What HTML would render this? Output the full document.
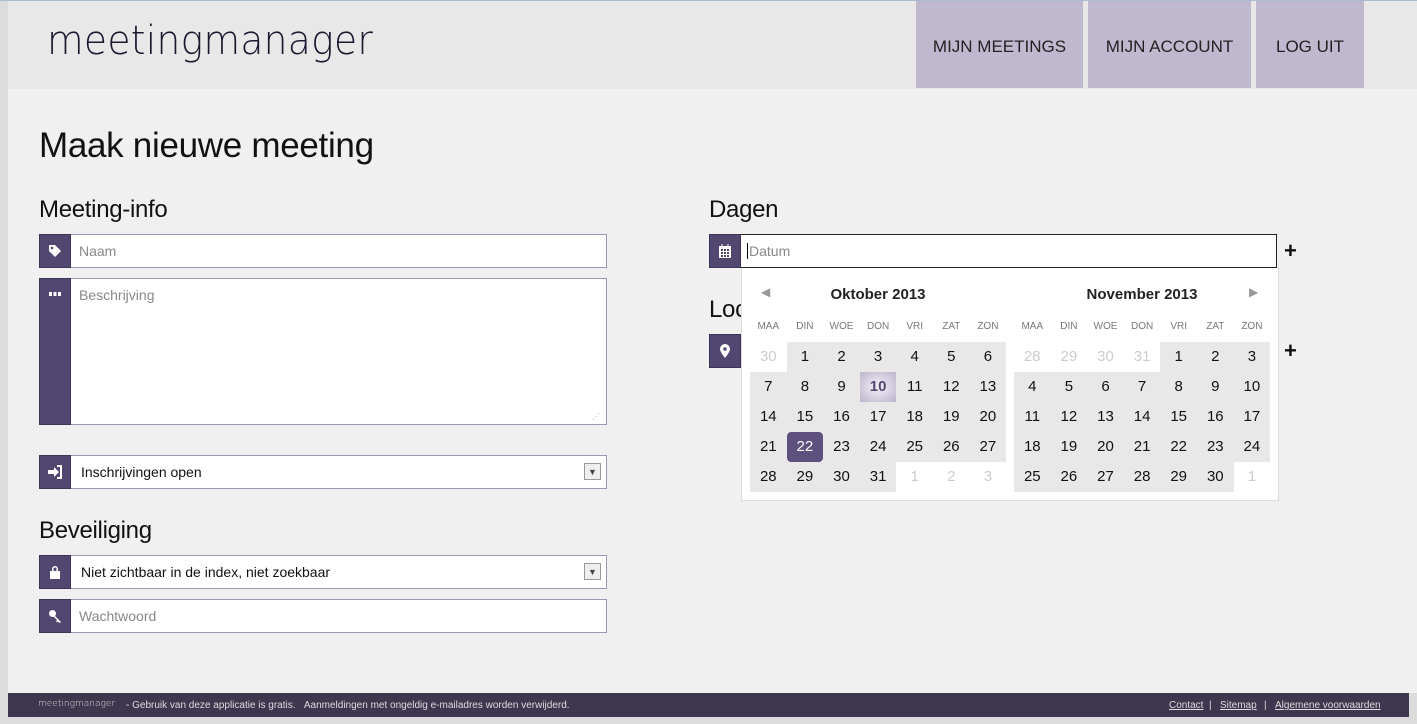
<!DOCTYPE html>
<html><head><meta charset="utf-8"><style>
*{box-sizing:border-box;margin:0;padding:0}
body{width:1417px;height:724px;position:relative;background:#dcdcdc;font-family:"Liberation Sans",sans-serif;overflow:hidden;color:#111}
.a{position:absolute}
#top{left:0;top:0;width:1417px;height:1px;background:#a9bcd0}
#hdr{left:8px;top:1px;width:1409px;height:88px;background:#e8e8e8}
#main{left:8px;top:89px;width:1409px;height:604px;background:#f0f0f0}
.nav{top:1px;height:87px;background:#c0b8cf;color:#222;font-size:17px;display:flex;align-items:center;justify-content:center;padding-top:4px}
h1{position:absolute;left:39px;top:126px;font-weight:normal;font-size:35px;color:#111;letter-spacing:-0.3px}
h2{position:absolute;font-weight:normal;font-size:24px;color:#111;letter-spacing:-0.3px}
.inp{position:absolute;height:34px;background:#fff;border:1px solid #9c95b8;border-left:none}
.ic{position:absolute;width:32px;background:#524770;border:1px solid #3c3355;display:flex;align-items:center;justify-content:center;color:#fff}
.ph{position:absolute;left:8px;top:8px;font-size:14px;color:#888}
.sel{color:#111}
.dd{position:absolute;right:5px;top:7px;width:17px;height:17px;border:1px solid #999;background:#eee;font-size:9px;text-align:center;line-height:16px;color:#444}
.cell{position:absolute;width:36.6px;height:30px;text-align:center;line-height:30px;font-size:15px;color:#111}
.g{background:#e8e8e8}
.o{color:#ccc}
.dh{position:absolute;width:36.6px;text-align:center;font-size:10px;color:#777;top:321px}
#foot{left:8px;top:693px;width:1401px;height:24px;background:#3e374f;color:#ddd;font-size:10px}
</style></head><body>
<div class="a" id="top"></div>
<div class="a" id="hdr"></div>
<div class="a" style="left:47px;top:18px;font-size:40px;color:#1c1830;transform:scaleX(0.94);transform-origin:left;font-family:'DejaVu Sans',sans-serif;font-weight:200;letter-spacing:0.3px">meetingmanager</div>
<div class="a nav" style="left:916px;width:167px">MIJN MEETINGS</div>
<div class="a nav" style="left:1088px;width:163px">MIJN ACCOUNT</div>
<div class="a nav" style="left:1256px;width:108px">LOG UIT</div>
<div class="a" id="main"></div>
<h1>Maak nieuwe meeting</h1>
<h2 style="left:39px;top:196px">Meeting-info</h2>
<h2 style="left:709px;top:196px">Dagen</h2>
<h2 style="left:709px;top:296px">Loc</h2>
<h2 style="left:39px;top:517px">Beveiliging</h2>

<div class="ic" style="left:39px;top:234px;height:34px"><svg width="14" height="14" viewBox="0 0 14 14"><path d="M1 1h6l6 6-6 6-6-6z" fill="#fff"/><circle cx="4" cy="4" r="1.3" fill="#524770"/></svg></div>
<div class="inp" style="left:71px;top:234px;width:536px"><span class="ph">Naam</span></div>

<div class="ic" style="left:39px;top:278px;height:147px;align-items:flex-start;padding-top:13px"><svg width="12" height="4" viewBox="0 0 12 4"><rect x="0" y="0" width="3" height="4" fill="#fff"/><rect x="4.5" y="0" width="3" height="4" fill="#fff"/><rect x="9" y="0" width="3" height="4" fill="#fff"/></svg></div>
<div class="inp" style="left:71px;top:278px;width:536px;height:147px"><span class="ph">Beschrijving</span><span style="position:absolute;right:6px;bottom:3px;font-size:8px;color:#aaa">⋰</span></div>

<div class="ic" style="left:39px;top:455px;height:34px"><svg width="15" height="14" viewBox="0 0 15 14"><path d="M0 5h6V2l5 5-5 5V9H0z M9 0h5v14H9v-2h3V2H9z" fill="#fff"/></svg></div>
<div class="inp" style="left:71px;top:455px;width:536px"><span class="ph sel" style="left:10px">Inschrijvingen open</span><div class="dd">▼</div></div>

<div class="ic" style="left:39px;top:555px;height:34px"><svg width="12" height="14" viewBox="0 0 12 14"><path d="M3 6V4a3 3 0 016 0v2h-1.5V4a1.5 1.5 0 00-3 0v2z M1 6h10v8H1z" fill="#fff"/></svg></div>
<div class="inp" style="left:71px;top:555px;width:536px"><span class="ph sel" style="left:10px">Niet zichtbaar in de index, niet zoekbaar</span><div class="dd">▼</div></div>

<div class="ic" style="left:39px;top:599px;height:34px"><svg width="14" height="14" viewBox="0 0 14 14"><circle cx="4.5" cy="4.5" r="3.5" fill="#fff"/><path d="M6 6l7 7-1.5 1L10 12.5 9 13.5 8 12l1-1-4-4z" fill="#fff"/></svg></div>
<div class="inp" style="left:71px;top:599px;width:536px"><span class="ph">Wachtwoord</span></div>

<div class="ic" style="left:709px;top:234px;height:34px"><svg width="14" height="14" viewBox="0 0 14 14"><path d="M1 2h12v12H1z" fill="#fff"/><path d="M3 5h2v2H3zM6 5h2v2H6zM9 5h2v2H9zM3 8h2v2H3zM6 8h2v2H6zM9 8h2v2H9zM3 11h2v2H3zM6 11h2v2H6zM9 11h2v2H9z" fill="#524770"/><path d="M3.5 0h1v3h-1zM9.5 0h1v3h-1z" fill="#fff"/></svg></div>
<div class="inp" style="left:741px;top:234px;width:536px;border:1px solid #222;border-left:none"><span class="ph" style="left:6px;border-left:1px solid #000;padding-left:1px;top:8px">Datum</span></div>
<div class="a" style="left:1284px;top:238px;font-size:22px;font-weight:bold">+</div>
<div class="ic" style="left:709px;top:334px;height:34px"><svg width="10" height="14" viewBox="0 0 10 14"><path d="M5 0a5 5 0 015 5c0 3-5 9-5 9S0 8 0 5a5 5 0 015-5z" fill="#fff"/><circle cx="5" cy="5" r="1.7" fill="#524770"/></svg></div>
<div class="a" style="left:1284px;top:338px;font-size:22px;font-weight:bold">+</div>

<div class="a" style="left:741px;top:268px;width:538px;height:233px;background:#fff;border:1px solid #ddd;border-top:none"></div>
<div class="a" style="left:761px;top:285px;font-size:12px;color:#999">◀</div>
<div class="a" style="left:1249px;top:285px;font-size:12px;color:#999">▶</div>
<div class="a" style="left:750px;top:286px;width:256px;text-align:center;font-size:15px;font-weight:bold;color:#222">Oktober 2013</div>
<div class="a" style="left:1014px;top:286px;width:256px;text-align:center;font-size:15px;font-weight:bold;color:#222">November 2013</div>
<div id="cal"></div>
<script>
var h=['MAA','DIN','WOE','DON','VRI','ZAT','ZON'],s='';
function m(x0,days){for(var i=0;i<7;i++)s+='<div class="dh" style="left:'+(x0+i*36.6)+'px">'+h[i]+'</div>';
days.forEach(function(d,k){var c=k%7,r=Math.floor(k/7),cls='cell',st='';
if(d[1]){cls+=' o'}else cls+=' g';
if(d[2]==1)st='background:radial-gradient(#f4f2f8,#bcb3cc);color:#524770;font-weight:bold;';
if(d[2]==2)st='background:#5e5180;color:#fff;border-radius:4px;';
s+='<div class="'+cls+'" style="left:'+(x0+c*36.6)+'px;top:'+(342+r*30)+'px;'+st+'">'+d[0]+'</div>'});}
var o=[[30,1]];for(var i=1;i<=31;i++)o.push([i,0,i==10?1:i==22?2:0]);o.push([1,1],[2,1],[3,1]);
var n=[[28,1],[29,1],[30,1],[31,1]];for(i=1;i<=30;i++)n.push([i,0]);n.push([1,1]);
m(750,o);m(1014,n);document.getElementById('cal').innerHTML=s;
</script>

<div class="a" id="foot">
<span style="position:absolute;left:30px;top:6px;font-family:'DejaVu Sans',sans-serif;font-weight:200;font-size:9px">meetingmanager</span>
<span style="position:absolute;left:118px;top:7px">- Gebruik van deze applicatie is gratis. &nbsp;&nbsp;Aanmeldingen met ongeldig e-mailadres worden verwijderd.</span>
<span style="position:absolute;left:1161px;top:7px;text-decoration:underline">Contact</span>
<span style="position:absolute;left:1201px;top:7px">|</span>
<span style="position:absolute;left:1212px;top:7px;text-decoration:underline">Sitemap</span>
<span style="position:absolute;left:1256px;top:7px">|</span>
<span style="position:absolute;left:1267px;top:7px;text-decoration:underline">Algemene voorwaarden</span>
</div>
</body></html>
